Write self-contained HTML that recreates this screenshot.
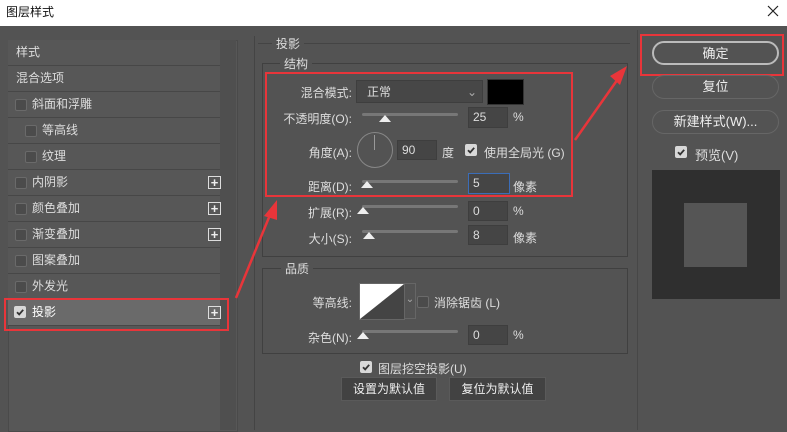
<html><head><style>
body{margin:0;width:787px;height:430px;background:#535353;font-family:"Liberation Sans","Noto Sans CJK SC",sans-serif;font-size:12px;color:#ddd;position:relative;overflow:hidden}
.a{position:absolute}
.row{position:absolute;left:8px;width:212px;height:25px;border-bottom:1px solid #474747;background:#575757;line-height:25px}
.cb{position:absolute;width:10px;height:10px;border:1px solid #6a6a6a;background:#4b4b4b;border-radius:2px}
.cbc{position:absolute;width:12px;height:12px;background:#d8d8d8;border-radius:2px}
.plus{position:absolute;left:200px;top:6px;width:11px;height:11px;border:1px solid #ddd;color:#eee;font-size:13px;line-height:11px;text-align:center;font-weight:bold}
.inp{position:absolute;background:#454545;border:1px solid #3e3e3e;height:18px;line-height:18px;padding-left:4px;box-sizing:border-box;color:#ddd}
.trk{position:absolute;height:3px;background:#777;border-radius:2px}
.thumb{position:absolute;width:0;height:0;border-left:6px solid transparent;border-right:6px solid transparent;border-bottom:7px solid #eee}
.lbl{position:absolute;text-align:right;width:100px}
.pill{position:absolute;left:652px;width:127px;height:24px;border:1px solid #777;border-radius:12px;box-sizing:border-box;text-align:center;line-height:22px;color:#eee;font-size:13px}
.btn{position:absolute;height:24px;background:#424242;border:1px solid #5a5a5a;box-sizing:border-box;text-align:center;line-height:22px;color:#eee}
.box{position:absolute;border:1px solid #404040}
</style></head><body>
<svg width="0" height="0" style="position:absolute"><defs><symbol id="ck" viewBox="0 0 12 12"><rect width="12" height="12" rx="2" fill="#d8d8d8"/><path d="M3 6.2 L5.2 8.4 L9.2 3.8" stroke="#333" stroke-width="1.8" fill="none"/></symbol></defs></svg>
<div class="a" style="left:0;top:0;width:787px;height:26px;background:#fff;color:#111;font-size:12px;line-height:24px;padding-left:6px;box-sizing:border-box">图层样式</div>
<svg class="a" style="left:767px;top:5px" width="12" height="12"><path d="M1 1L11 11M11 1L1 11" stroke="#222" stroke-width="1.2"/></svg>
<div class="a" style="left:8px;top:40px;width:228px;height:390px;background:#575757;border:1px solid #4a4a4a"></div>
<div class="a" style="left:220px;top:40px;width:16px;height:390px;background:#4f4f4f"></div>
<div class="row" style="top:40px;padding-left:8px;width:204px">样式</div>
<div class="row" style="top:66px;padding-left:8px;width:204px">混合选项</div>
<div class="row" style="top:92px"><div class="cb" style="left:7px;top:7px"></div><span class="a" style="left:24px">斜面和浮雕</span></div>
<div class="row" style="top:118px"><div class="cb" style="left:17px;top:7px"></div><span class="a" style="left:34px">等高线</span></div>
<div class="row" style="top:144px"><div class="cb" style="left:17px;top:7px"></div><span class="a" style="left:34px">纹理</span></div>
<div class="row" style="top:170px"><div class="cb" style="left:7px;top:7px"></div><span class="a" style="left:24px">内阴影</span><div class="plus">+</div></div>
<div class="row" style="top:196px"><div class="cb" style="left:7px;top:7px"></div><span class="a" style="left:24px">颜色叠加</span><div class="plus">+</div></div>
<div class="row" style="top:222px"><div class="cb" style="left:7px;top:7px"></div><span class="a" style="left:24px">渐变叠加</span><div class="plus">+</div></div>
<div class="row" style="top:248px"><div class="cb" style="left:7px;top:7px"></div><span class="a" style="left:24px">图案叠加</span></div>
<div class="row" style="top:274px"><div class="cb" style="left:7px;top:7px"></div><span class="a" style="left:24px">外发光</span></div>
<div class="row" style="top:300px;background:#6a6a6a;color:#fff"><svg class="a" style="left:6px;top:6px" width="12" height="12"><use href="#ck"/></svg><span class="a" style="left:24px">投影</span><div class="plus">+</div></div>
<div class="a" style="left:4px;top:298px;width:221px;height:29px;border:2px solid #e8353a"></div>

<div class="a" style="left:254px;top:36px;width:1px;height:394px;background:#444"></div>
<div class="a" style="left:637px;top:30px;width:1px;height:400px;background:#474747"></div>
<div class="a" style="left:258px;top:43px;width:372px;height:1px;background:#444"></div>
<div class="a" style="left:272px;top:35px;background:#535353;padding:0 4px">投影</div>
<div class="box" style="left:262px;top:63px;width:364px;height:192px"></div>
<div class="a" style="left:280px;top:55px;background:#535353;padding:0 4px">结构</div>
<div class="lbl" style="left:252px;top:84px">混合模式:</div>
<div class="inp" style="left:356px;top:80px;width:127px;height:23px;line-height:22px;background:#474747;padding-left:10px">正常<span class="a" style="right:5px;top:0;color:#aaa">⌄</span></div>
<div class="a" style="left:487px;top:79px;width:35px;height:24px;background:#000;border:1px solid #333"></div>
<div class="lbl" style="left:252px;top:110px">不透明度(O):</div>
<div class="trk" style="left:362px;top:113px;width:96px"></div><div class="thumb" style="left:379px;top:115px"></div>
<div class="inp" style="left:468px;top:107px;width:40px;height:21px">25</div><div class="a" style="left:513px;top:110px">%</div>
<div class="lbl" style="left:252px;top:144px">角度(A):</div>
<div class="a" style="left:357px;top:132px;width:34px;height:34px;border:1px solid #888;border-radius:50%"></div>
<div class="a" style="left:374px;top:135px;width:1px;height:15px;background:#999"></div>
<div class="inp" style="left:397px;top:140px;width:40px;height:20px">90</div><div class="a" style="left:442px;top:144px">度</div>
<svg class="a" style="left:465px;top:144px" width="12" height="12"><use href="#ck"/></svg><div class="a" style="left:484px;top:144px">使用全局光 (G)</div>
<div class="lbl" style="left:252px;top:178px">距离(D):</div>
<div class="trk" style="left:362px;top:180px;width:96px"></div><div class="thumb" style="left:361px;top:181px"></div>
<div class="inp" style="left:468px;top:173px;width:42px;height:21px;border:1px solid #3b6db8">5</div><div class="a" style="left:513px;top:178px">像素</div>
<div class="a" style="left:265px;top:72px;width:304px;height:121px;border:2px solid #e8353a"></div>
<div class="lbl" style="left:252px;top:204px">扩展(R):</div>
<div class="trk" style="left:362px;top:205px;width:96px"></div><div class="thumb" style="left:357px;top:207px"></div>
<div class="inp" style="left:468px;top:201px;width:40px;height:20px">0</div><div class="a" style="left:513px;top:204px">%</div>
<div class="lbl" style="left:252px;top:230px">大小(S):</div>
<div class="trk" style="left:362px;top:230px;width:96px"></div><div class="thumb" style="left:363px;top:232px"></div>
<div class="inp" style="left:468px;top:225px;width:40px;height:20px">8</div><div class="a" style="left:513px;top:229px">像素</div>

<div class="box" style="left:262px;top:268px;width:364px;height:84px"></div>
<div class="a" style="left:281px;top:260px;background:#535353;padding:0 4px">品质</div>
<div class="lbl" style="left:252px;top:294px">等高线:</div>
<svg class="a" style="left:359px;top:283px" width="46" height="37"><rect width="46" height="37" fill="#444"/><polygon points="1,36 45,1 1,1" fill="#fff"/><rect x="0.5" y="0.5" width="45" height="36" fill="none" stroke="#666"/></svg>
<div class="a" style="left:404px;top:283px;width:12px;height:36px;border:1px solid #666;box-sizing:border-box;color:#aaa;font-size:10px;text-align:center;line-height:32px">⌄</div>
<div class="cb" style="left:417px;top:296px"></div><div class="a" style="left:434px;top:294px">消除锯齿 (L)</div>
<div class="lbl" style="left:252px;top:329px">杂色(N):</div>
<div class="trk" style="left:362px;top:330px;width:96px"></div><div class="thumb" style="left:357px;top:332px"></div>
<div class="inp" style="left:468px;top:325px;width:40px;height:20px">0</div><div class="a" style="left:513px;top:328px">%</div>
<svg class="a" style="left:360px;top:361px" width="12" height="12"><use href="#ck"/></svg><div class="a" style="left:378px;top:360px">图层挖空投影(U)</div>
<div class="btn" style="left:341px;top:377px;width:96px">设置为默认值</div>
<div class="btn" style="left:449px;top:377px;width:97px">复位为默认值</div>

<div class="pill" style="top:41px;border:2px solid #bbb">确定</div>
<div class="a" style="left:640px;top:34px;width:140px;height:38px;border:2px solid #e8353a"></div>
<div class="pill" style="top:75px;border-color:#666">复位</div>
<div class="pill" style="top:110px;border-color:#666">新建样式(W)...</div>
<svg class="a" style="left:675px;top:146px" width="12" height="12"><use href="#ck"/></svg><div class="a" style="left:695px;top:145px;font-size:13px">预览(V)</div>
<div class="a" style="left:652px;top:170px;width:128px;height:129px;background:#2f2f2f"></div>
<div class="a" style="left:684px;top:203px;width:63px;height:64px;background:#555"></div>

<svg class="a" style="left:0;top:0" width="787" height="430">
<line x1="236" y1="298" x2="272" y2="210" stroke="#e8353a" stroke-width="2.5"/>
<polygon points="277,200 264,216 277,220" fill="#e8353a"/>
<line x1="575" y1="140" x2="620" y2="76" stroke="#e8353a" stroke-width="2.5"/>
<polygon points="627,66 610,76 620,85" fill="#e8353a"/>
</svg>
</body></html>
